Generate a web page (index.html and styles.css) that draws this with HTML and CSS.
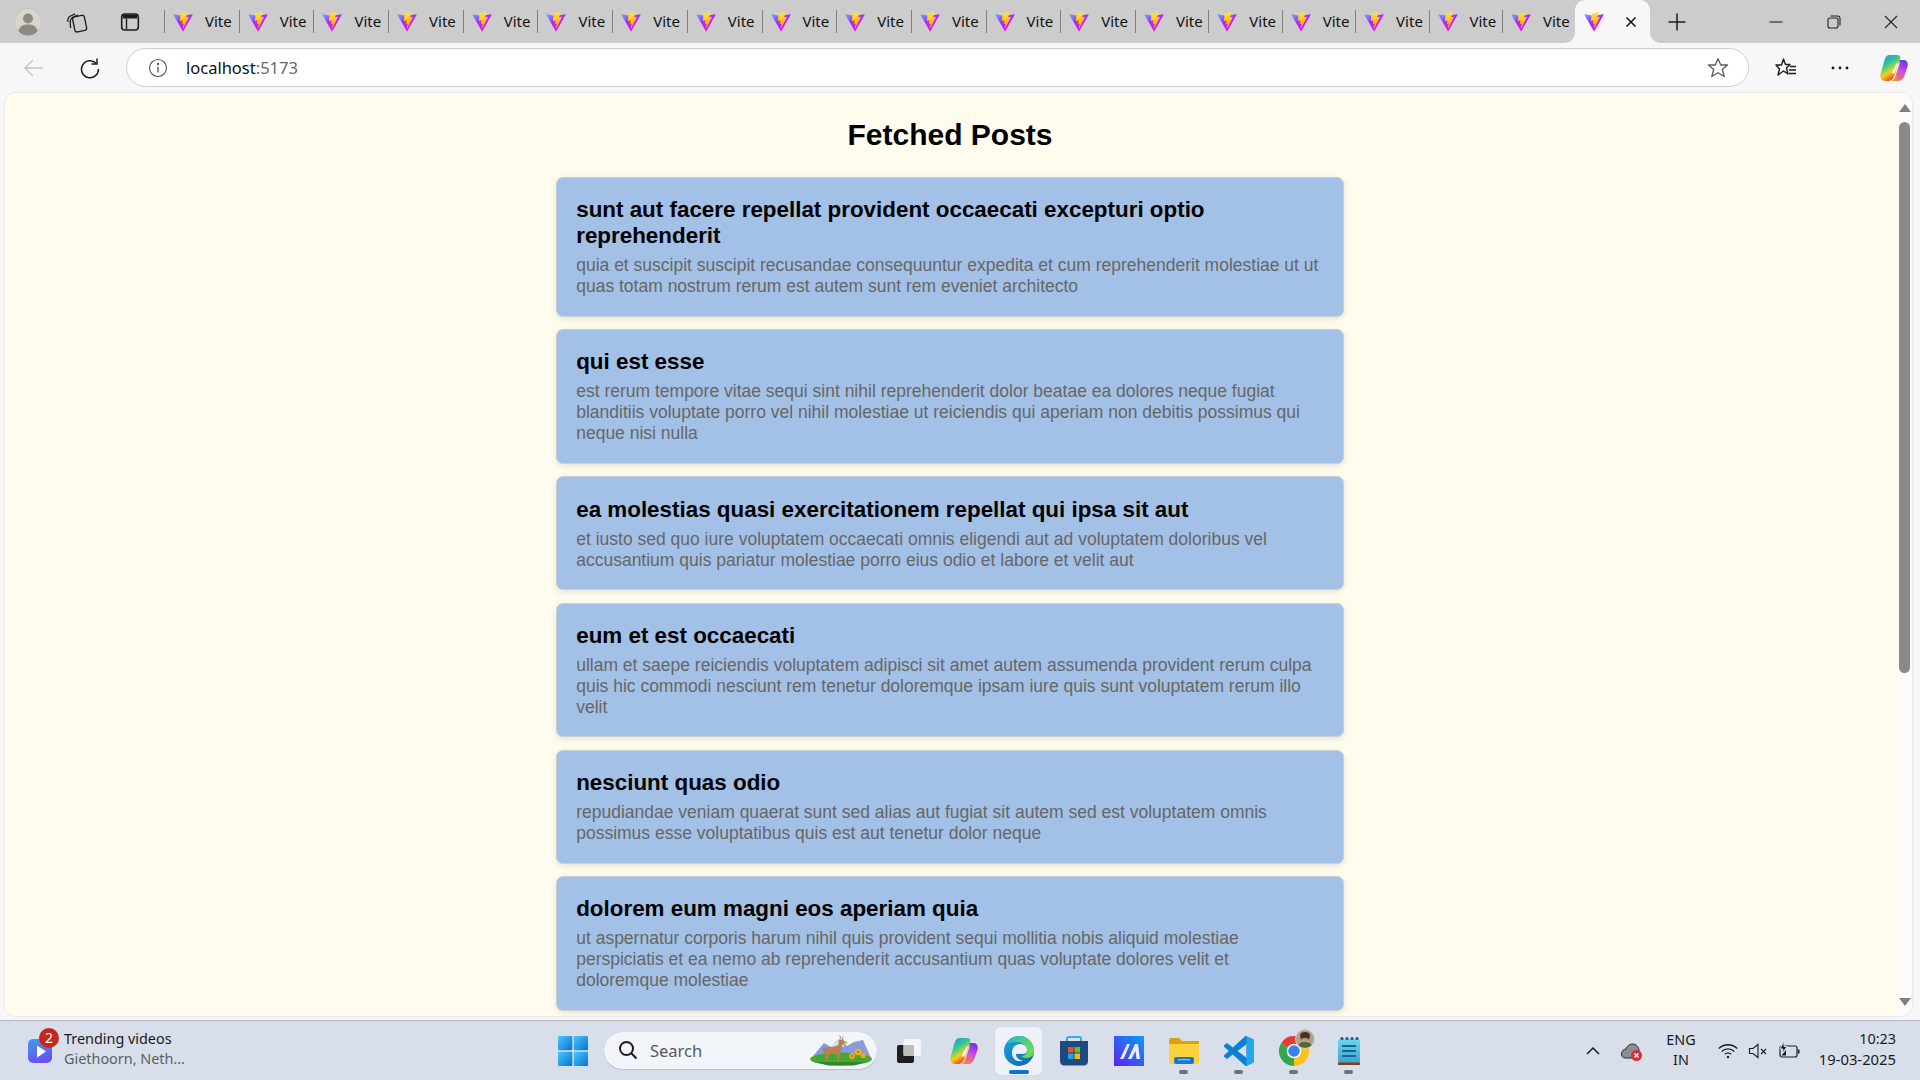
FILE: index.html
```html
<!DOCTYPE html>
<html lang="en">
<head>
<meta charset="utf-8">
<title>Vite</title>
<link rel="stylesheet" href="styles.css">
</head>
<body>
<svg class="sprite" aria-hidden="true">
  <defs>
    <linearGradient id="vA" x1="6" y1="33" x2="235" y2="344" gradientUnits="userSpaceOnUse"><stop offset="0" stop-color="#62b4ff"/><stop offset=".55" stop-color="#a52cff"/><stop offset="1" stop-color="#e018f0"/></linearGradient>
    <linearGradient id="vB" x1="195" y1="9" x2="236" y2="293" gradientUnits="userSpaceOnUse"><stop offset="0" stop-color="#ffea83"/><stop offset=".1" stop-color="#ffdd35"/><stop offset="1" stop-color="#ffa800"/></linearGradient>
    <linearGradient id="cpA" x1="0" y1="0" x2=".5" y2="1"><stop offset="0" stop-color="#2a8ff2"/><stop offset=".42" stop-color="#30c890"/><stop offset=".72" stop-color="#f2d21e"/><stop offset="1" stop-color="#f0401e"/></linearGradient>
    <linearGradient id="cpB" x1=".8" y1="0" x2=".3" y2="1"><stop offset="0" stop-color="#6a2ff0"/><stop offset=".5" stop-color="#d34fe0"/><stop offset="1" stop-color="#f58a2a"/></linearGradient>
    <linearGradient id="wdg" x1="0" y1="0" x2=".4" y2="1"><stop offset="0" stop-color="#3f9bf2"/><stop offset="1" stop-color="#6a50f0"/></linearGradient>
    <linearGradient id="win" x1="0" y1="0" x2="1" y2="1"><stop offset="0" stop-color="#4cc8fb"/><stop offset="1" stop-color="#0672d0"/></linearGradient>
    <linearGradient id="edgeA" x1="0" y1="0" x2="1" y2="1"><stop offset="0" stop-color="#1fa6d8"/><stop offset="1" stop-color="#0c5fc0"/></linearGradient>
    <linearGradient id="edgeB" x1="0" y1="0" x2="1" y2=".6"><stop offset="0" stop-color="#22b8c8"/><stop offset="1" stop-color="#6fdc50"/></linearGradient>
    <linearGradient id="mapp" x1="0" y1="1" x2="1" y2="0"><stop offset="0" stop-color="#5a22f0"/><stop offset="1" stop-color="#0b9cf5"/></linearGradient>
    <linearGradient id="pad" x1="0" y1="0" x2="0" y2="1"><stop offset="0" stop-color="#6ed4ef"/><stop offset="1" stop-color="#3da4d0"/></linearGradient>
    <symbol id="vite" viewBox="0 0 410 404">
      <path fill="url(#vA)" d="M399.641 59.5246L215.643 388.545C211.844 395.338 202.084 395.378 198.228 388.618L10.5817 59.5563C6.38087 52.1896 12.6802 43.2665 21.0281 44.7586L205.223 77.6824C206.398 77.8924 207.601 77.8904 208.776 77.6763L389.119 44.8058C397.439 43.2894 403.768 52.1434 399.641 59.5246Z"/>
      <path fill="url(#vB)" d="M292.965 1.5744L156.801 28.2552C154.563 28.6937 152.906 30.5903 152.771 32.8664L144.395 174.33C144.198 177.662 147.258 180.248 150.51 179.498L188.42 170.749C191.967 169.931 195.172 173.055 194.443 176.622L183.18 231.775C182.422 235.487 185.907 238.661 189.532 237.56L212.947 230.446C216.577 229.344 220.065 232.527 219.297 236.242L201.398 322.875C200.278 328.294 207.486 331.249 210.492 326.603L212.5 323.5L323.454 102.072C325.312 98.3645 322.108 94.137 318.036 94.9228L279.014 102.454C275.347 103.161 272.227 99.746 273.262 96.1583L298.731 7.86689C299.767 4.27314 296.636 0.855181 292.965 1.5744Z"/>
    </symbol>
    <symbol id="copilot" viewBox="0 0 28 26">
      <path fill="url(#cpA)" d="M9 0H17C20 0 21 2 20 4L15 19C13.500 23.500 11.500 26 8 26H5C1.500 26 -.5 23 .5 19.500L4 7C5 3 6.500 0 9 0Z"/>
      <path fill="url(#cpB)" d="M19 5H23.500C26.500 5 28.500 8 27.500 11.500L24.500 20.500C23.500 24 21 26 18 26H10C13 26 14.500 24 15.500 21L18.500 12C19.500 9 20 7 19 5Z"/>
      <path fill="#fff" opacity=".9" d="M16.500 8.500L18 8.500L14.500 18.500L11.500 18.500Z"/>
    </symbol>
  </defs>
</svg>

<header class="tabstrip">
  <div class="slot slot-profile">
    <svg class="ico-28" viewBox="0 0 28 28"><circle cx="14" cy="14" r="13.500" fill="#d9d6cf" stroke="#c4c2bc"/><circle cx="14" cy="10.500" r="5" fill="#8d8a84"/><path fill="#8d8a84" d="M4.500 23C5.500 18 9 16.500 14 16.500S22.500 18 23.500 23C21 26.500 17.500 27.500 14 27.500S7 26.500 4.500 23Z"/></svg>
  </div>
  <div class="slot slot-coll">
    <svg class="ico-22" viewBox="0 0 22 22" fill="none" stroke="#1c1c1c" stroke-width="1.300"><path d="M2 11C1.500 8 2.500 6 4.500 5L9 2.800"/><path d="M4.700 17C4 13 4 10 5 8C5.800 6.500 7 5.800 8.500 5.300L12 4"/><rect x="7.500" y="5" width="12" height="15.500" rx="2.500" transform="rotate(-12 13 12)"/></svg>
  </div>
  <div class="slot slot-vtabs">
    <svg class="ico-20" viewBox="0 0 20 20"><rect x="1.700" y="2" width="16.600" height="16" rx="3" fill="none" stroke="#1c1c1c" stroke-width="1.600"/><path fill="#1c1c1c" d="M3 2.500H17V6.500H3Z"/><path stroke="#1c1c1c" stroke-width="1.400" d="M6.500 6.500V17.500"/></svg>
  </div>
  <div class="tabs">
    <div class="tab"><svg class="vite"><use href="#vite"/></svg><span>Vite</span></div>
    <div class="tab"><svg class="vite"><use href="#vite"/></svg><span>Vite</span></div>
    <div class="tab"><svg class="vite"><use href="#vite"/></svg><span>Vite</span></div>
    <div class="tab"><svg class="vite"><use href="#vite"/></svg><span>Vite</span></div>
    <div class="tab"><svg class="vite"><use href="#vite"/></svg><span>Vite</span></div>
    <div class="tab"><svg class="vite"><use href="#vite"/></svg><span>Vite</span></div>
    <div class="tab"><svg class="vite"><use href="#vite"/></svg><span>Vite</span></div>
    <div class="tab"><svg class="vite"><use href="#vite"/></svg><span>Vite</span></div>
    <div class="tab"><svg class="vite"><use href="#vite"/></svg><span>Vite</span></div>
    <div class="tab"><svg class="vite"><use href="#vite"/></svg><span>Vite</span></div>
    <div class="tab"><svg class="vite"><use href="#vite"/></svg><span>Vite</span></div>
    <div class="tab"><svg class="vite"><use href="#vite"/></svg><span>Vite</span></div>
    <div class="tab"><svg class="vite"><use href="#vite"/></svg><span>Vite</span></div>
    <div class="tab tab-narrow"><svg class="vite"><use href="#vite"/></svg><span>Vite</span></div>
    <div class="tab tab-narrow"><svg class="vite"><use href="#vite"/></svg><span>Vite</span></div>
    <div class="tab tab-narrow"><svg class="vite"><use href="#vite"/></svg><span>Vite</span></div>
    <div class="tab tab-narrow"><svg class="vite"><use href="#vite"/></svg><span>Vite</span></div>
    <div class="tab tab-narrow"><svg class="vite"><use href="#vite"/></svg><span>Vite</span></div>
    <div class="tab tab-narrow"><svg class="vite"><use href="#vite"/></svg><span>Vite</span></div>
    <div class="tab-active"><svg class="vite"><use href="#vite"/></svg>
      <svg class="ico-12" viewBox="0 0 12 12"><path d="M1.500 1.500L10.500 10.500M10.500 1.500L1.500 10.500" stroke="#111" stroke-width="1.500"/></svg>
    </div>
  </div>
  <div class="slot slot-new">
    <svg class="ico-20" viewBox="0 0 20 20"><path d="M10 1.500V18.500M1.500 10H18.500" stroke="#1c1c1c" stroke-width="1.500"/></svg>
  </div>
  <div class="winctl">
    <div class="slot slot-win"><svg class="ico-14" viewBox="0 0 14 14"><path d="M0.500 7H13.500" stroke="#222" stroke-width="1.100"/></svg></div>
    <div class="slot slot-win"><svg class="ico-14" viewBox="0 0 14 14" fill="none" stroke="#222" stroke-width="1.100"><rect x="1" y="3" width="10" height="10" rx="2"/><path d="M3.500 1H10.500C12 1 13 2 13 3.500V10.500"/></svg></div>
    <div class="slot slot-win"><svg class="ico-14" viewBox="0 0 14 14"><path d="M1 1L13 13M13 1L1 13" stroke="#222" stroke-width="1.100"/></svg></div>
  </div>
</header>

<nav class="toolbar">
  <div class="slot slot-back"><svg class="ico-22" viewBox="0 0 22 22" fill="none" stroke="#c4c4c4" stroke-width="1.400"><path d="M20 11H2M10 3L2 11L10 19"/></svg></div>
  <div class="slot slot-reload"><svg class="ico-22" viewBox="0 0 22 22" fill="none" stroke="#1c1c1c" stroke-width="1.500"><path d="M17.300 6.500A8.500 8.500 0 1 0 19.500 12"/><path d="M18 1.500V7H12.500"/></svg></div>
  <div class="address">
    <svg class="ico-20" viewBox="0 0 20 20" fill="none" stroke="#5c5c5c" stroke-width="1.200"><circle cx="10" cy="10" r="8.500"/><path d="M10 8.800V14.500" stroke-width="1.400"/><circle cx="10" cy="6" r=".6" fill="#5c5c5c"/></svg>
    <span class="url">localhost<span class="url-port">:5173</span></span>
    <svg class="ico-22 star" viewBox="0 0 22 22" fill="none" stroke="#5c5c5c" stroke-width="1.300"><path d="M11 1.800L13.800 8H20.500L15.300 12.500L17.200 19.500L11 15.700L4.800 19.500L6.700 12.500L1.500 8H8.200Z" stroke-linejoin="round"/></svg>
  </div>
  <div class="slot slot-tool"><svg class="ico-22" viewBox="0 0 22 22" fill="none" stroke="#1c1c1c" stroke-width="1.400"><path d="M8.500 2L10.500 7.500H15L11.500 11L13 17L8.500 14L3 18L4.500 12L1 8H6.500Z" stroke-linejoin="round"/><path d="M15 9.500H21M14 13H21M14 16.500H21"/></svg></div>
  <div class="slot slot-tool"><svg class="ico-22" viewBox="0 0 22 22" fill="#1c1c1c"><circle cx="4" cy="11" r="1.400"/><circle cx="11" cy="11" r="1.400"/><circle cx="18" cy="11" r="1.400"/></svg></div>
  <div class="slot slot-tool-last"><svg class="ico-copilot"><use href="#copilot"/></svg></div>
</nav>

<div class="browser">
  <main class="page">
    <h1 class="page-title">Fetched Posts</h1>
    <article class="post"><h2>sunt aut facere repellat provident occaecati excepturi optio reprehenderit</h2><p>quia et suscipit suscipit recusandae consequuntur expedita et cum reprehenderit molestiae ut ut quas totam nostrum rerum est autem sunt rem eveniet architecto</p></article>
    <article class="post"><h2>qui est esse</h2><p>est rerum tempore vitae sequi sint nihil reprehenderit dolor beatae ea dolores neque fugiat blanditiis voluptate porro vel nihil molestiae ut reiciendis qui aperiam non debitis possimus qui neque nisi nulla</p></article>
    <article class="post"><h2>ea molestias quasi exercitationem repellat qui ipsa sit aut</h2><p>et iusto sed quo iure voluptatem occaecati omnis eligendi aut ad voluptatem doloribus vel accusantium quis pariatur molestiae porro eius odio et labore et velit aut</p></article>
    <article class="post"><h2>eum et est occaecati</h2><p>ullam et saepe reiciendis voluptatem adipisci sit amet autem assumenda provident rerum culpa quis hic commodi nesciunt rem tenetur doloremque ipsam iure quis sunt voluptatem rerum illo velit</p></article>
    <article class="post"><h2>nesciunt quas odio</h2><p>repudiandae veniam quaerat sunt sed alias aut fugiat sit autem sed est voluptatem omnis possimus esse voluptatibus quis est aut tenetur dolor neque</p></article>
    <article class="post"><h2>dolorem eum magni eos aperiam quia</h2><p>ut aspernatur corporis harum nihil quis provident sequi mollitia nobis aliquid molestiae perspiciatis et ea nemo ab reprehenderit accusantium quas voluptate dolores velit et doloremque molestiae</p></article>
  </main>
  <aside class="scrollbar">
    <div class="arrow-up"></div>
    <div class="thumb"></div>
    <div class="arrow-down"></div>
  </aside>
</div>

<footer class="taskbar">
  <div class="news">
    <div class="news-icon">
      <svg class="ico-24" viewBox="0 0 24 24"><rect width="24" height="24" rx="5" fill="url(#wdg)"/><path d="M9 6.500L18 12.500L9 18.500Z" fill="#fff"/></svg>
      <span class="badge">2</span>
    </div>
    <div class="news-text"><div class="news-title">Trending videos</div><div class="news-sub">Giethoorn, Neth...</div></div>
  </div>
  <div class="tb-start">
    <svg class="ico-30" viewBox="0 0 30 30" fill="url(#win)"><rect width="14.300" height="14.300" rx="1"/><rect x="15.700" width="14.300" height="14.300" rx="1"/><rect y="15.700" width="14.300" height="14.300" rx="1"/><rect x="15.700" y="15.700" width="14.300" height="14.300" rx="1"/></svg>
  </div>
  <div class="search">
    <svg class="ico-20" viewBox="0 0 20 20" fill="none" stroke="#1d1d1d" stroke-width="2"><circle cx="8.500" cy="8.500" r="6.500"/><path d="M13.300 13.300L18.500 18.500"/></svg>
    <span class="search-text">Search</span>
    <svg class="deer" viewBox="0 0 62 32">
      <path fill="#8b9ad8" d="M3 22L14 9L21 13L29 5L37 12L44 8L53 6L61 24Z"/>
      <path fill="#dfe6f6" d="M20 14L29 6L35 13L28 11Z"/>
      <ellipse cx="31" cy="25" rx="31" ry="6.500" fill="#48a632"/>
      <path fill="#2c8a2a" d="M6 28H56L44 31.500H18Z"/>
      <path fill="#bd7d4c" d="M13 13.500L28 12.500L29 6L33 5L35 8L32 11L30 19L29 28H27.500L27 20L19 20L16.500 28H15L15.500 20L13 18Z"/>
      <path fill="#a0603a" d="M29.500 0.500L31 4L30 5ZM33.500 0.500L33 4.500L32 5Z"/>
      <circle cx="35.500" cy="8.500" r="1.600" fill="#9ad04a"/>
      <circle cx="42" cy="22" r="3" fill="#eda81c"/><circle cx="48" cy="18" r="3.300" fill="#f0b31e"/><circle cx="53" cy="21.500" r="2.600" fill="#eda81c"/>
      <circle cx="48" cy="18" r="1.100" fill="#b56c10"/><circle cx="42" cy="22" r="1" fill="#b56c10"/>
    </svg>
  </div>
  <div class="tb-item">
    <svg class="ico-24" viewBox="0 0 24 24"><rect x="0" y="6" width="17" height="18" rx="2" fill="#1f1f1f"/><rect x="6.500" y="0" width="17.500" height="17" rx="2" fill="#f7f8fb" fill-opacity=".88"/><rect x="6.500" y="6" width="10.500" height="11" fill="#bdbdbd"/></svg>
  </div>
  <div class="tb-item">
    <svg class="ico-copilot"><use href="#copilot"/></svg>
  </div>
  <div class="tb-item tb-active">
    <svg class="ico-30" viewBox="0 0 30 30"><circle cx="15" cy="15" r="15" fill="url(#edgeA)"/><path fill="url(#edgeB)" d="M3 7C6 2 11 0 15 0C24 0 30 7 30 15C30 19 27 22 23 22C20 22 18 21 17 20C20 20 23 18 23 14C22 8 16 5.500 11 6C7 6.500 4.500 7.500 3 7Z"/><path fill="#eaf0fa" d="M8 17C8 11 12 8 16 8C20 8 23 10.500 23 14C23 17 21 18 18.500 18C15 18 12 17 12 19C12 21 15 24.500 19 24.500C16 26.500 8 25 8 17Z"/></svg>
  </div>
  <div class="tb-item">
    <svg class="ico-30" viewBox="0 0 30 30"><path d="M8 6V3C8 1.500 9 1 10 1H20C21 1 22 1.500 22 3V6" fill="none" stroke="#2ab0e8" stroke-width="2"/><path fill="#1d4a80" d="M1 5H29V25C29 28 27 29.500 25 29.500H5C3 29.500 1 28 1 25Z"/><rect x="9" y="11" width="5.500" height="5.500" fill="#f0502a"/><rect x="15.500" y="11" width="5.500" height="5.500" fill="#7ab820"/><rect x="9" y="17.500" width="5.500" height="5.500" fill="#1ea4e8"/><rect x="15.500" y="17.500" width="5.500" height="5.500" fill="#f8b81a"/></svg>
  </div>
  <div class="tb-item">
    <svg class="ico-30" viewBox="0 0 30 30"><rect width="30" height="30" fill="url(#mapp)"/><path fill="#e8eaff" d="M6 23L13 8H16L9.500 23ZM14 23L21 8H24L26 23H22.500L21.500 15L17.500 23Z"/></svg>
  </div>
  <div class="tb-item tb-running">
    <svg class="ico-30" viewBox="0 0 30 26"><path fill="#dca108" d="M0 2.500C0 1 1 0 2.500 0H10L13 3H30V10H0Z"/><path fill="#fbd13e" d="M0 6H30V24C30 25 29 26 28 26H2C1 26 0 25 0 24Z"/><rect x="5" y="19" width="20" height="7" rx="2" fill="#1a78c8"/><rect x="9" y="21" width="12" height="1.300" fill="#7fc0f0"/></svg>
  </div>
  <div class="tb-item tb-running">
    <svg class="ico-30" viewBox="0 0 24 24"><path fill="#0f7fcf" d="M23.150 2.587L18.210.21a1.494 1.494 0 0 0-1.705.29l-9.460 8.630-4.120-3.128a.999.999 0 0 0-1.276.057L.327 7.261A1 1 0 0 0 .326 8.740L3.899 12 .326 15.260a1 1 0 0 0 .001 1.479L1.650 17.940a.999.999 0 0 0 1.276.057l4.120-3.128 9.460 8.630a1.492 1.492 0 0 0 1.704.29l4.942-2.377A1.500 1.500 0 0 0 24 20.060V3.939a1.500 1.500 0 0 0-.85-1.352zm-5.146 14.861L10.826 12l7.178-5.448v10.896z"/><path fill="#25a5ee" d="M18 0.100L23.150 2.587A1.500 1.500 0 0 1 24 3.939V20.060A1.500 1.500 0 0 1 23.150 21.413L18 23.900Z"/></svg>
  </div>
  <div class="tb-item tb-running tb-chrome">
    <svg class="ico-30" viewBox="0 0 30 30"><path fill="#e53b30" d="M15 15L2 7.500A15 15 0 0 1 28 7.500Z"/><path fill="#34a64f" d="M15 15L15 30A15 15 0 0 1 2 7.500Z"/><path fill="#fbc117" d="M15 15L28 7.500A15 15 0 0 1 15 30Z"/><circle cx="15" cy="15" r="7.300" fill="#fff"/><circle cx="15" cy="15" r="5.800" fill="#3d7ff0"/></svg>
    <svg class="avatar" viewBox="0 0 20 20"><circle cx="10" cy="10" r="9.500" fill="#b0a090" stroke="#d6d2cc"/><circle cx="10" cy="7" r="4" fill="#c09070"/><path fill="#4a2f22" d="M5 6C6 2 14 2 15 6L14 11C13 8 7 8 6 11Z"/><path fill="#55662e" d="M3.500 16C5 12 15 12 16.500 16C14 19.500 6 19.500 3.500 16Z"/></svg>
  </div>
  <div class="tb-item tb-running">
    <svg class="ico-30" viewBox="0 0 24 30"><rect x="1" y="3" width="22" height="24" rx="2" fill="url(#pad)"/><path fill="#8a3d10" d="M1 26.500H23V29H1Z"/><circle cx="5" cy="2.500" r="1.500" fill="#16587e"/><circle cx="10" cy="2.500" r="1.500" fill="#16587e"/><circle cx="15" cy="2.500" r="1.500" fill="#16587e"/><circle cx="20" cy="2.500" r="1.500" fill="#16587e"/><path d="M5 10H19M5 15H19M5 20H19" stroke="#14688f" stroke-width="1.800"/></svg>
  </div>
  <div class="tray">
    <div class="tray-chevron"><svg class="ico-14" viewBox="0 0 14 14" fill="none" stroke="#1c1c1c" stroke-width="1.500"><path d="M1 10L7 4L13 10"/></svg></div>
    <div class="tray-cloud"><svg class="ico-22" viewBox="0 0 22 22"><path fill="#8a8d92" stroke="#2a2a2a" d="M4 18C1 18 0.500 15 0.500 14C0.500 11 3 9 5 9C6 5.500 9 4 11.500 4C15 4 17.500 6.500 18 10L18 18Z"/><circle cx="15.500" cy="15.500" r="5.500" fill="#d92d3a"/><path d="M13.500 13.500L17.500 17.500M17.500 13.500L13.500 17.500" stroke="#fff" stroke-width="1.400"/></svg></div>
    <div class="tray-lang"><div>ENG</div><div>IN</div></div>
    <div class="tray-wifi"><svg class="ico-20" viewBox="0 0 20 20" fill="none" stroke="#1c1c1c" stroke-width="1.300"><path d="M0.800 7.500C6 2.500 14 2.500 19.200 7.500M3.800 10.500C7.500 7 12.500 7 16.200 10.500M6.800 13.300C8.800 11.500 11.200 11.500 13.200 13.300"/><circle cx="10" cy="16" r="1.200" fill="#1c1c1c" stroke="none"/></svg></div>
    <div class="tray-sound"><svg class="ico-20" viewBox="0 0 20 20" fill="none" stroke="#1c1c1c" stroke-width="1.100"><path d="M1.500 7.500H5L10 3.500V16.500L5 12.500H1.500Z"/><path d="M13 8L18 13M18 8L13 13"/></svg></div>
    <div class="tray-batt"><svg class="ico-22" viewBox="0 0 22 22"><rect x="2" y="6" width="17" height="11" rx="2" fill="none" stroke="#1c1c1c" stroke-width="1.200"/><path fill="#1c1c1c" d="M20 9.500H21.500V13.500H20ZM3.500 15.500L8 10V15.500Z"/><path fill="#1c1c1c" stroke="#d8dfea" d="M6 1L2 9H5L4 14L9 6.500H6Z"/></svg></div>
    <div class="clock"><div>10:23</div><div class="clock-date">19-03-2025</div></div>
  </div>
</footer>
</body>
</html>
```

FILE: styles.css
```css
* { box-sizing: border-box; }
html, body { height: 100%; }
body {
  margin: 0;
  height: 100vh;
  display: flex;
  flex-direction: column;
  overflow: hidden;
  background: #f7f7f7;
  font-family: "Noto Sans", "Open Sans", sans-serif;
  color: #1a1a1a;
}
svg { display: block; flex: none; }
.sprite { width: 0; height: 0; overflow: hidden; }
.ico-12 { width: 12px; height: 12px; }
.ico-14 { width: 14px; height: 14px; }
.ico-20 { width: 20px; height: 20px; }
.ico-22 { width: 22px; height: 22px; }
.ico-24 { width: 24px; height: 24px; }
.ico-28 { width: 28px; height: 28px; }
.ico-30 { width: 30px; height: 30px; }
.ico-copilot { width: 28px; height: 26px; }
.slot { display: flex; align-items: center; justify-content: center; height: 100%; flex: none; }

/* tab strip */
.tabstrip { display: flex; align-items: stretch; height: 43px; flex: none; background: #cccccc; }
.slot-profile { width: 56px; }
.slot-coll { width: 42px; }
.slot-vtabs { width: 64px; margin-right: 2px; }
.tabs { display: flex; align-items: stretch; flex: none; }
.tab {
  display: flex; align-items: center; width: 74.700px; flex: none; gap: 12px; padding-left: 9px;
  font-size: 15px; color: #111; position: relative;
}
.tab span { padding-bottom: 2px; }
.tab-narrow { width: 73.400px; }
.tab::before {
  content: ""; position: absolute; left: 0; top: 10px; bottom: 10px; width: 1px; background: #7f7f7f;
}
.vite { width: 20px; height: 20px; }
.tab-active {
  display: flex; align-items: center; justify-content: space-between; width: 75px; flex: none;
  padding: 0 13px 0 9px; background: #f7f7f7; border-radius: 10px 10px 0 0; position: relative;
}
.tab-active::before, .tab-active::after {
  content: ""; position: absolute; bottom: 0; width: 10px; height: 10px;
}
.tab-active::before { left: -10px; background: radial-gradient(circle at 0 0, #cccccc 9.500px, #f7f7f7 10px); }
.tab-active::after { right: -10px; background: radial-gradient(circle at 100% 0, #cccccc 9.500px, #f7f7f7 10px); }
.slot-new { width: 54px; }
.winctl { display: flex; margin-left: auto; }
.slot-win { width: 57.500px; }

/* toolbar */
.toolbar { display: flex; align-items: stretch; height: 50px; flex: none; background: #f7f7f7; padding: 5px 0 6px; }
.slot-back { width: 68px; }
.slot-reload { width: 44px; margin-right: 14px; }
.address {
  flex: 1; display: flex; align-items: center; gap: 18px; padding-left: 21px; padding-right: 19px;
  background: #fff; border: 1px solid #cfcfcf; border-radius: 20px; font-size: 16.500px;
}
.url { color: #111; }
.url-port { color: #6a6a6a; }
.star { margin-left: auto; }
.slot-tool { width: 54px; }
.address + .slot-tool { margin-left: 10px; }
.slot-tool-last { width: 53px; }

/* page area */
.browser {
  flex: 1; min-height: 0; display: flex; margin: 0 8px 4px 5px;
  border-radius: 10px; overflow: hidden; background: #fbfbfb; box-shadow: 0 0 2px rgba(0,0,0,.2);
}
.page {
  flex: 1; min-width: 0; overflow: hidden; background: #fffcee; padding: 25px 2px 0 0;
  font-family: "Liberation Sans", Arial, sans-serif;
}
.page-title { margin: 0 0 25px; font-size: 30px; line-height: 34px; font-weight: 700; color: #000; text-align: center; }
.post {
  width: 788px; margin: 0 auto 12.600px; padding: 19.200px 19.200px 18.450px; background: #a3c1e6;
  border: 1px solid #c9cfd8; border-radius: 7px; box-shadow: 0 2px 6px rgba(0,0,0,.1);
}
.post h2 { margin: 0 0 6px; font-size: 22.400px; line-height: 26px; font-weight: 700; color: #000; }
.post p { margin: 0; font-size: 17.500px; line-height: 21px; color: #666; }

/* scrollbar */
.scrollbar { width: 15px; flex: none; display: flex; flex-direction: column; align-items: center; background: #fbfbfb; padding-top: 11px; }
.arrow-up { width: 0; height: 0; border-left: 6.500px solid transparent; border-right: 6.500px solid transparent; border-bottom: 8px solid #808080; }
.thumb { width: 11px; height: 551px; margin-top: 10px; border-radius: 6px; background: #8a8a8a; }
.arrow-down { width: 0; height: 0; margin-top: auto; margin-bottom: 10px; border-left: 6.500px solid transparent; border-right: 6.500px solid transparent; border-top: 8px solid #808080; }

/* taskbar */
.taskbar { display: flex; align-items: center; height: 60px; flex: none; background: #d8dfea; border-top: 1px solid #b4b9c3; padding-right: 24px; }
.news { display: flex; align-items: center; width: 558px; flex: none; padding-left: 28px; gap: 12px; }
.news-icon { position: relative; }
.badge {
  position: absolute; top: -11px; right: -7px; width: 20px; height: 20px; border-radius: 50%;
  background: #c4281c; color: #fff; font-size: 14px; line-height: 20px; text-align: center;
}
.news-text { font-size: 14.400px; line-height: 20px; padding-bottom: 4px; }
.news-title { color: #1a1a1a; }
.news-sub { color: #5b5f66; }
.tb-start { width: 30px; flex: none; }
.search {
  display: flex; align-items: center; width: 273px; height: 38px; margin-left: 16px; flex: none; padding-left: 14px;
  background: #f2f5fa; border-radius: 19px; border-bottom: 1px solid #b9bec9; box-shadow: 0 0 1px rgba(0,0,0,.15);
}
.search-text { margin-left: 12px; font-size: 16.500px; color: #55595f; }
.deer { width: 62px; height: 32px; margin-left: auto; margin-right: 5px; }
.tb-item {
  width: 55px; height: 48px; flex: none; display: flex; align-items: center; justify-content: center; position: relative;
}
.search + .tb-item { margin-left: 4px; }
.tb-active { background: #eef1f8; border-radius: 5px; width: 47px; margin: 0 4px; box-shadow: 0 0 1px rgba(0,0,0,.2); }
.tb-active::after {
  content: ""; position: absolute; bottom: 1px; left: 14px; width: 20px; height: 4px; border-radius: 2px; background: #0a72d0;
}
.tb-running::after {
  content: ""; position: absolute; bottom: 1px; left: 23px; width: 9px; height: 4px; border-radius: 2px; background: #6f7278;
}
.avatar { position: absolute; width: 20px; height: 20px; top: 2px; left: 29px; }
.tray { display: flex; align-items: center; margin-left: auto; font-size: 14.400px; color: #1a1a1a; }
.tray > div { display: flex; justify-content: center; align-items: center; flex: none; }
.tray-chevron { width: 39px; }
.tray-cloud { width: 39px; }
.tray > .tray-lang { width: 59px; flex-direction: column; line-height: 20px; padding-bottom: 2px; }
.tray-wifi { width: 35px; }
.tray-sound { width: 24px; }
.tray-batt { width: 38px; }
.tray > .clock { width: 88.500px; flex-direction: column; align-items: flex-end; line-height: 20px; padding-bottom: 4px; }
.clock-date { font-size: 14.800px; }
```
